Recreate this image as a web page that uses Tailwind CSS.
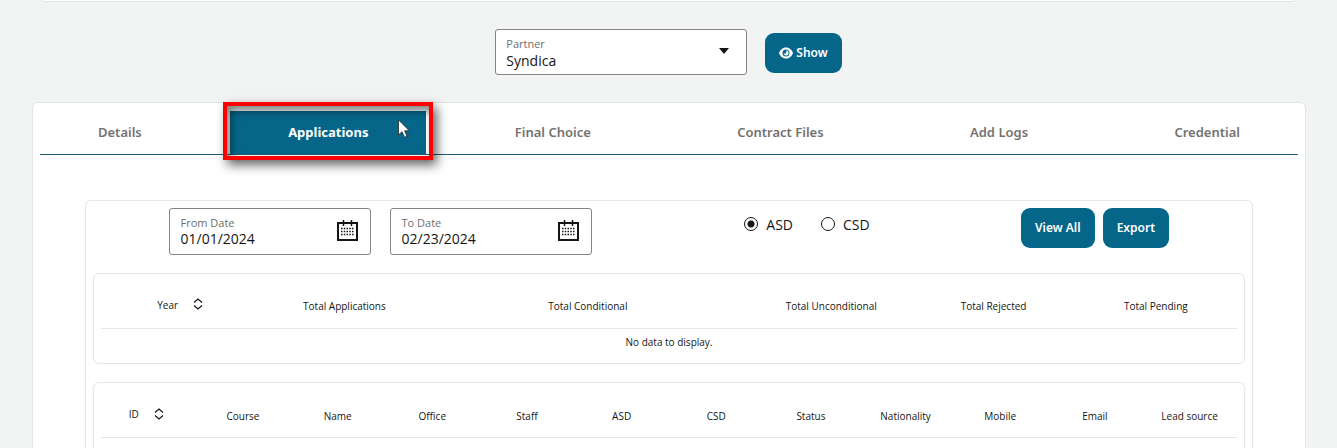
<!DOCTYPE html>
<html lang="en">
<head>
<meta charset="utf-8">
<meta name="viewport" content="width=device-width, initial-scale=1">
<title>Partner applications</title>
<script src="https://cdn.jsdelivr.net/npm/@tailwindcss/browser@4"></script>
</head>
<body class="flex min-h-screen flex-col bg-[#f1f4f3] font-['Open_Sans',sans-serif] text-[#161513]">
<svg class="hidden">
  <symbol id="calendar" viewBox="0 0 21 21"><path fill="none" stroke="currentColor" stroke-width="2" d="M1 3H20V20H1Z"/><path fill="none" stroke="currentColor" stroke-width="1.5" d="M6.500 0V6M14.500 0V6"/><path fill="none" stroke="currentColor" stroke-width="1.5" stroke-dasharray="1.500 1.250" d="M4 8.500H17.500M4 11.500H17.500M4 14.500H17.500"/></symbol>
  <symbol id="sort" viewBox="0 0 10 12"><path fill="none" stroke="currentColor" stroke-width="1.200" d="M1 4.500L5 1L9 4.500M1 7.500L5 11L9 7.500"/></symbol>
</svg>

<div class="mx-[42px] h-[2px] rounded-b-md border-x border-b border-[#e3e5e4] bg-white"></div>

<form class="mt-[27px] flex items-center justify-center gap-[18px]">
  <div class="relative">
    <label for="partner" class="absolute top-2 left-[11px] text-[11px] leading-[14px] text-[#6f6e6c]">Partner</label>
    <select id="partner" class="h-[46px] w-[252px] appearance-none rounded-[3px] border border-[#858483] bg-white pt-4 pl-[10px] text-[14px]"><option>Syndica</option></select>
    <svg class="pointer-events-none absolute top-[19px] right-[18px] h-[6px] w-[10px]" viewBox="0 0 10 6"><path d="M0 0H10L5 6Z" fill="#161513"/></svg>
  </div>
  <button type="button" class="mt-[2px] flex h-10 items-center gap-[3px] rounded-[9px] bg-[#056689] px-[14px] font-['Noto_Sans',sans-serif] text-[12px] font-semibold text-white">
    <svg class="h-3 w-[14px]" viewBox="0 0 14 12"><path fill="#fff" d="M7 .5C3.500 .5 1 3 0 6C1 9 3.500 11.500 7 11.500S13 9 14 6C13 3 10.500 .5 7 .5Z"/><circle cx="7" cy="6" r="3.500" fill="#056689"/><path fill="#fff" d="M6.800 3.500A2.500 2.500 0 1 1 4.600 6.200A1.700 1.700 0 0 0 6.800 3.500Z"/></svg>
    Show</button>
</form>

<main class="mr-[31px] ml-8 mt-[27px] flex flex-1 flex-col rounded-t-md border border-b-0 border-[#e3e5e4] bg-white px-[7px]">
  <nav class="flex justify-between border-b border-[#215e78] pt-2 font-['Noto_Sans',sans-serif] text-[13px] font-semibold text-[#73726f]">
    <a href="#" class="px-[58px] leading-[43px]">Details</a>
    <div class="relative">
      <a href="#" class="block bg-[#056689] px-[58px] leading-[43px] font-bold text-white">Applications</a>
      <div class="pointer-events-none absolute -inset-x-[7px] -top-[9px] -bottom-[6px] border-4 border-[#fe0000] shadow-[4px_5px_10px_rgba(0,0,0,0.6),inset_4px_5px_8px_rgba(0,0,0,0.5)]"></div>
      <svg class="pointer-events-none absolute top-2 right-4 h-[19px] w-3" viewBox="0 0 12 19"><path d="M.5 .8V16L4 12.700L6.500 18.300L9 17.200L6.600 11.800H11.300Z" fill="#fff" stroke="#222" stroke-width=".8"/></svg>
    </div>
    <a href="#" class="px-[58px] leading-[43px]">Final Choice</a>
    <a href="#" class="px-[58px] leading-[43px]">Contract Files</a>
    <a href="#" class="px-[58px] leading-[43px]">Add Logs</a>
    <a href="#" class="px-[58px] leading-[43px]">Credential</a>
  </nav>

  <section class="mx-[45px] mt-[45px] flex flex-1 flex-col rounded-t-md border border-b-0 border-[#e6e6e6] px-[7px] pt-[7px]">
    <form class="grid grid-cols-4 pb-[18px]">
      <div class="col-span-2 flex justify-center gap-[19px] pr-[2px]">
        <div class="relative">
          <label for="from" class="absolute top-2 left-3 text-[11px] leading-[14px] text-[#6f6e6c]">From Date</label>
          <input id="from" type="text" value="01/01/2024" class="h-[47px] w-[202px] rounded-[3px] border border-[#858483] pt-[14px] pl-[11px] text-[14px]">
          <svg class="pointer-events-none absolute top-3 right-[13px] h-[21px] w-[21px]"><use href="#calendar"/></svg>
        </div>
        <div class="relative">
          <label for="to" class="absolute top-2 left-3 text-[11px] leading-[14px] text-[#6f6e6c]">To Date</label>
          <input id="to" type="text" value="02/23/2024" class="h-[47px] w-[202px] rounded-[3px] border border-[#858483] pt-[14px] pl-[11px] text-[14px]">
          <svg class="pointer-events-none absolute top-3 right-[13px] h-[21px] w-[21px]"><use href="#calendar"/></svg>
        </div>
      </div>
      <div class="flex h-8 items-center justify-center gap-7 pr-3 text-[14px]">
        <label class="flex items-center gap-2"><input type="radio" name="kind" checked class="size-[14px] appearance-none rounded-full border border-[#161513] checked:bg-[radial-gradient(circle,#161513_3px,#fff_4px)]">ASD</label>
        <label class="flex items-center gap-2"><input type="radio" name="kind" class="size-[14px] appearance-none rounded-full border border-[#161513] checked:bg-[radial-gradient(circle,#161513_3px,#fff_4px)]">CSD</label>
      </div>
      <div class="flex justify-center gap-2 pr-3 font-['Noto_Sans',sans-serif] text-[12px] font-semibold text-white">
        <button type="button" class="h-10 rounded-[9px] bg-[#056689] px-[14px]">View All</button>
        <button type="button" class="h-10 rounded-[9px] bg-[#056689] px-[14px]">Export</button>
      </div>
    </form>

    <div class="rounded-md border border-[#e6e6e6] px-[7px] pb-[6px]">
      <table class="w-full table-fixed text-[10px]">
        <thead>
          <tr class="h-[54px] border-b border-[#e6e6e6] [&>th]:p-0 [&>th]:pt-3 [&>th]:font-normal">
            <th scope="col" class="w-1/7"><span class="mr-1 mb-[2px] flex items-center justify-center gap-[15px]">Year <svg class="mb-1 h-3 w-[10px]"><use href="#sort"/></svg></span></th>
            <th scope="col" class="w-1/7">Total Applications</th>
            <th scope="col" class="w-2/7">Total Conditional</th>
            <th scope="col" class="w-1/7">Total Unconditional</th>
            <th scope="col" class="w-1/7">Total Rejected</th>
            <th scope="col" class="w-1/7">Total Pending</th>
          </tr>
        </thead>
        <tbody><tr class="h-[29px]"><td colspan="6" class="p-0 text-center">No data to display.</td></tr></tbody>
      </table>
    </div>

    <div class="mt-[18px] flex-1 rounded-t-md border border-b-0 border-[#e6e6e6] px-[7px]">
      <table class="w-full table-fixed text-[10px]">
        <thead>
          <tr class="h-[54px] border-b border-[#e6e6e6] [&>th]:p-0 [&>th]:pt-[14px] [&>th]:font-normal">
            <th scope="col"><span class="mr-1 mb-1 flex items-center justify-center gap-[15px]">ID <svg class="mb-[2px] h-3 w-[10px]"><use href="#sort"/></svg></span></th>
            <th scope="col">Course</th><th scope="col">Name</th><th scope="col">Office</th><th scope="col">Staff</th><th scope="col">ASD</th><th scope="col">CSD</th><th scope="col">Status</th><th scope="col">Nationality</th><th scope="col">Mobile</th><th scope="col">Email</th><th scope="col">Lead source</th>
          </tr>
        </thead>
      </table>
    </div>
  </section>
</main>
</body>
</html>
